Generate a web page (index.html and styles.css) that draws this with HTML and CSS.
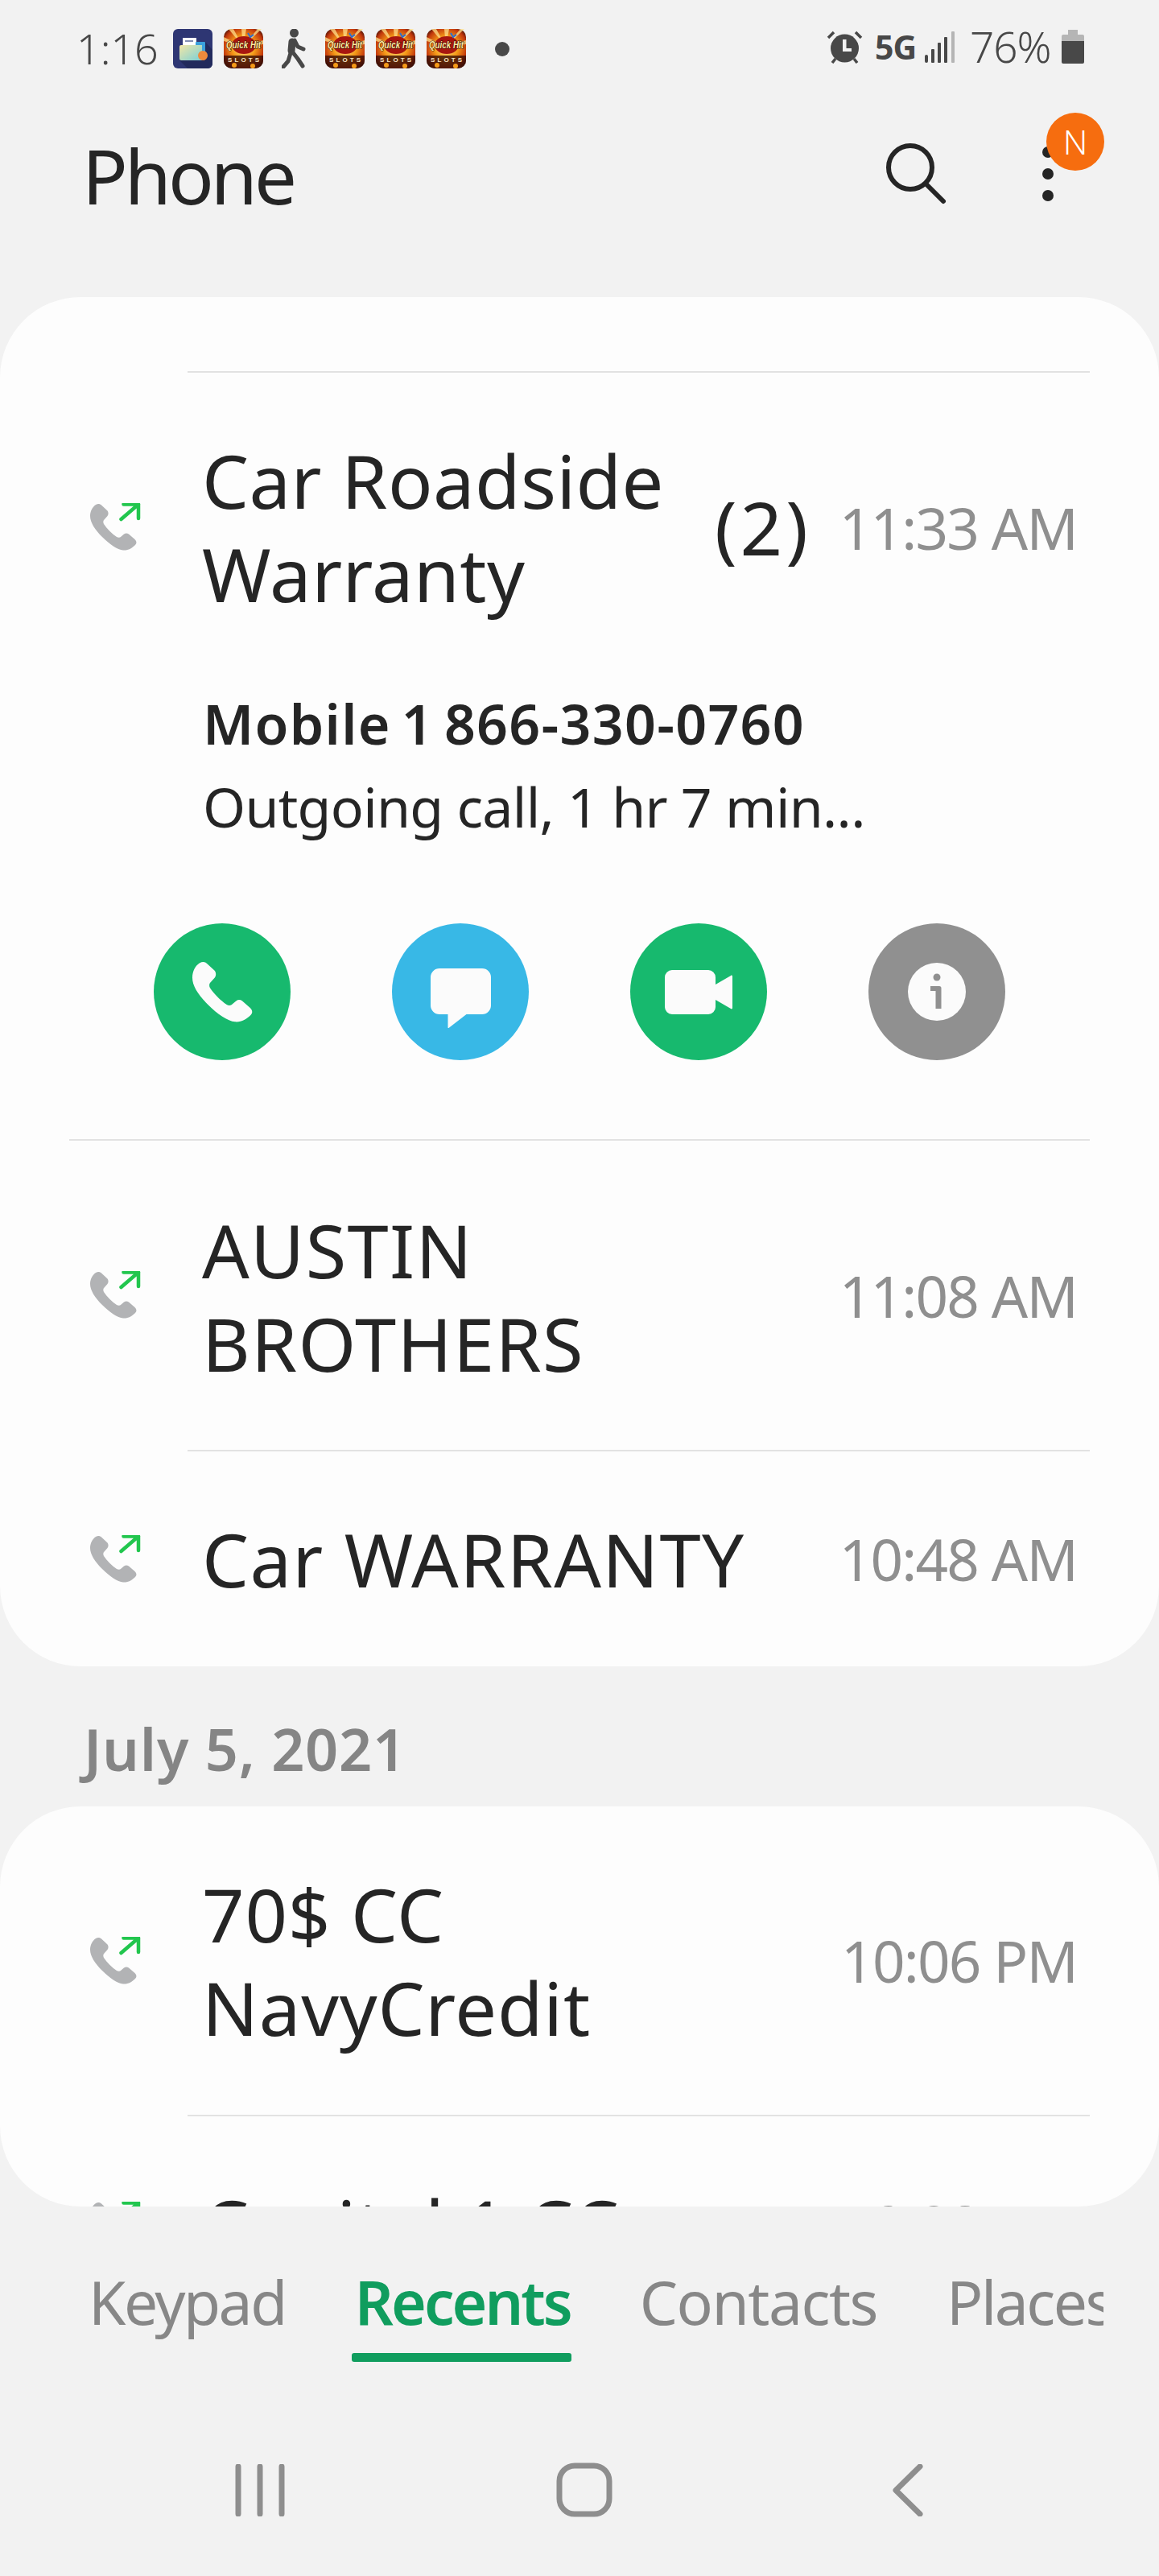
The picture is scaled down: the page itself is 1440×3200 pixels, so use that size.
FILE: index.html
```html
<!DOCTYPE html>
<html lang="en">
<head>
  <meta charset="UTF-8" />
  <title>Phone</title>
  <link rel="stylesheet" href="styles.css">
</head>
<body>
  <svg class="defs" width="0" height="0">
    <defs>
      <radialGradient id="blast" cx="50%" cy="48%" r="65%">
        <stop offset="0" stop-color="#ffe88a"/>
        <stop offset="0.45" stop-color="#f59a18"/>
        <stop offset="0.8" stop-color="#c2370c"/>
        <stop offset="1" stop-color="#2e0a04"/>
      </radialGradient>
      <linearGradient id="folder" x1="0" y1="0" x2="1" y2="1">
        <stop offset="0" stop-color="#f3e6a6"/>
        <stop offset="1" stop-color="#79d0d8"/>
      </linearGradient>
      <symbol id="slots" viewBox="0 0 49 49">
        <rect width="49" height="49" rx="10" fill="url(#blast)"/>
        <path d="M24 22L6 0h6zM24 22L22 0h6zM24 22L42 0h5zM24 22L0 10v5zM24 22l25-8v5z" fill="#ffe08a" opacity=".75"/>
        <ellipse cx="25" cy="20" rx="15" ry="11" fill="#a8160f"/>
        <path d="M30 5l3 5 4-3" fill="none" stroke="#2f6fd0" stroke-width="2"/>
        <text x="24.5" y="24" class="slots-title" textLength="43" lengthAdjust="spacingAndGlyphs">Quick Hit</text>
        <path d="M0 33h49v6a10 10 0 0 1-10 10H10A10 10 0 0 1 0 39z" fill="#3a0f06" opacity=".8"/>
        <circle cx="13" cy="45" r="3" fill="#f59a18"/><circle cx="36" cy="46" r="3" fill="#f59a18"/>
        <text x="24.5" y="41" class="slots-sub" textLength="39">SLOTS</text>
      </symbol>
      <symbol id="handset" viewBox="0 0 58 58">
        <path d="M7 1C10-.5 12 0 14 1.500L21 8C23 10 23 13 21.500 15L17.500 19.500C16 21 16 23 17 25C21 31 27 37 33 41C35 42 37 42 38.500 40.500L42 37.500C44 36 46 36 48 37.500L55.500 44C58 46.500 58 49 56 51C52 55 47 58 41 57.500C34 57 24 50 15 41C6 32 0 23 0 15C0 9 3 3.500 7 1Z"/>
      </symbol>
      <symbol id="out-call" viewBox="0 0 63 60">
        <use href="#handset" x="0" y="1" width="58" height="58" fill="#b2b3b5"/>
        <path d="M38.500 20L60 1.500M41.500 1.500H60V19" fill="none" stroke="#22c64e" stroke-width="4.500" stroke-linecap="round" stroke-linejoin="round"/>
      </symbol>
    </defs>
  </svg>

  <div class="status">
    <span class="clock">1:16</span>
    <div class="notifs">
      <svg class="app" viewBox="0 0 49 49">
        <rect width="49" height="49" rx="6" fill="#2e3673"/>
        <path d="M8 39L40 16 49 26v17a6 6 0 0 1-6 6H18z" fill="#222a5c"/>
        <rect x="12" y="11" width="17" height="14" fill="#fff"/>
        <path d="M15 15h10" stroke="#5a6a9a" stroke-width="1.500"/>
        <rect x="28" y="16" width="12" height="22" rx="1" fill="#3aa0dc"/>
        <path d="M8 22a2 2 0 0 1 2-2h26v19H10a2 2 0 0 1-2-2z" fill="url(#folder)"/>
        <circle cx="37" cy="33" r="6" fill="#ee8a3c"/>
      </svg>
      <svg class="app"><use href="#slots"/></svg>
      <svg class="walker" viewBox="0 0 30 49">
        <circle cx="15.500" cy="5" r="5.500" fill="#484848"/>
        <path d="M13 16L12 27" stroke="#484848" stroke-width="9" stroke-linecap="round"/>
        <path d="M16 14l4 8 7 3M13 28l7 9 6 9M11 30L8 40 2 47" fill="none" stroke="#484848" stroke-width="5" stroke-linecap="round" stroke-linejoin="round"/>
      </svg>
      <svg class="app"><use href="#slots"/></svg>
      <svg class="app"><use href="#slots"/></svg>
      <svg class="app"><use href="#slots"/></svg>
      <span class="more-dot"></span>
    </div>
    <div class="sys">
      <svg class="alarm" viewBox="0 0 45 41">
        <circle cx="22.500" cy="22" r="17.500" fill="#484848"/>
        <path d="M20 11h4.500v11H31v4H20z" fill="#f2f2f2"/>
        <path d="M2 9l7-7M43 9l-7-7M7 40l4-5M38 40l-4-5" stroke="#484848" stroke-width="3.500"/>
      </svg>
      <span class="net">5G</span>
      <svg class="signal" viewBox="0 0 37 39">
        <rect x="0" y="29" width="4" height="10" rx="2" fill="#484848"/>
        <rect x="8" y="22" width="4" height="17" rx="1" fill="#484848"/>
        <rect x="16" y="14" width="4" height="25" rx="1" fill="#484848"/>
        <rect x="24" y="7" width="4" height="32" rx="1" fill="#484848"/>
        <rect x="33" y="0" width="4" height="39" rx="1" fill="#b5b5b5"/>
      </svg>
      <span class="pct">76%</span>
      <svg class="battery" viewBox="0 0 28 42">
        <path d="M8 0h12v6h6a2 2 0 0 1 2 2v6H0V8a2 2 0 0 1 2-2h6z" fill="#b5b5b5"/>
        <path d="M0 14h28v26a2 2 0 0 1-2 2H2a2 2 0 0 1-2-2z" fill="#484848"/>
      </svg>
    </div>
  </div>

  <header class="appbar">
    <h1>Phone</h1>
    <svg class="search" viewBox="0 0 76 76">
      <ellipse cx="31" cy="30" rx="27" ry="27" fill="none" stroke="#252525" stroke-width="6"/>
      <path d="M50 50l22 22" stroke="#252525" stroke-width="6" stroke-linecap="round"/>
    </svg>
    <div class="menu">
      <i></i><i></i><i></i>
      <span class="badge">N</span>
    </div>
  </header>

  <main class="list">
    <section class="card card-top">
      <div class="divider"></div>
      <div class="row row-open">
        <svg class="call-icon"><use href="#out-call"/></svg>
        <div class="name">Car Roadside Warranty</div>
        <span class="count">(2)</span>
        <span class="time">11:33 AM</span>
      </div>
      <div class="details">
        <div class="number">Mobile 1 866-330-0760</div>
        <div class="meta">Outgoing call, 1 hr 7 min...</div>
      </div>
      <div class="actions">
        <div class="act act-green">
          <svg width="75" height="75" fill="#fbfbfb"><use href="#handset"/></svg>
        </div>
        <div class="act act-blue">
          <svg class="bubble" viewBox="0 0 75 74" width="75" height="74"><path d="M11 0h53a11 11 0 0 1 11 11v35a11 11 0 0 1-11 11H44.500L22.500 74c-.5.300-1 0-1-.5V57H11A11 11 0 0 1 0 46V11A11 11 0 0 1 11 0z" fill="#fbfbfb"/></svg>
        </div>
        <div class="act act-green">
          <svg viewBox="0 0 84 55" width="84" height="55"><path d="M9 0h45a9 9 0 0 1 9 9v9L82 7c1-1 2 0 2 1v39c0 1-1 2-2 1L63 37v9a9 9 0 0 1-9 9H9a9 9 0 0 1-9-9V9a9 9 0 0 1 9-9z" fill="#fbfbfb"/></svg>
        </div>
        <div class="act act-grey">
          <svg viewBox="0 0 72 72" width="72" height="72"><circle cx="36" cy="36" r="36" fill="#fbfbfb"/><circle cx="36" cy="18" r="4.500" fill="#909090"/><path d="M28 29h11a2.500 2.500 0 0 1 2.500 2.500V57h-7V35H28z" fill="#909090"/></svg>
        </div>
      </div>
      <div class="divider divider-long"></div>
      <div class="row row-two">
        <svg class="call-icon"><use href="#out-call"/></svg>
        <div class="name name-narrow name-caps">AUSTIN BROTHERS</div>
        <span class="time">11:08 AM</span>
      </div>
      <div class="divider"></div>
      <div class="row row-one">
        <svg class="call-icon"><use href="#out-call"/></svg>
        <div class="name name-caps">Car WARRANTY</div>
        <span class="time">10:48 AM</span>
      </div>
    </section>

    <h2 class="date">July 5, 2021</h2>

    <section class="card card-cut">
      <div class="row row-card">
        <svg class="call-icon"><use href="#out-call"/></svg>
        <div class="name name-narrow name-mixed">70$ CC NavyCredit</div>
        <span class="time">10:06 PM</span>
      </div>
      <div class="divider"></div>
      <div class="row row-one row-last">
        <svg class="call-icon"><use href="#out-call"/></svg>
        <div class="name">Capital 1 CC</div>
        <span class="time">9:08 PM</span>
      </div>
    </section>
  </main>

  <nav class="tabs">
    <a>Keypad</a>
    <a class="on">Recents</a>
    <a class="wide">Contacts</a>
    <a>Places</a>
  </nav>

  <div class="softkeys">
    <svg width="62" height="65" viewBox="0 0 62 65"><path d="M4 3v59M31 3v59M58 3v59" stroke="#8e8e8e" stroke-width="7" stroke-linecap="round"/></svg>
    <svg class="key-home" width="70" height="68" viewBox="0 0 70 68"><rect x="4" y="4" width="62" height="60" rx="19" fill="none" stroke="#8e8e8e" stroke-width="7"/></svg>
    <svg width="38" height="65" viewBox="0 0 38 65"><path d="M34 3L4 32.500 34 62" fill="none" stroke="#8e8e8e" stroke-width="7" stroke-linecap="round" stroke-linejoin="round"/></svg>
  </div>
</body>
</html>
```

FILE: styles.css
```css
* { box-sizing: border-box; }
html, body { margin: 0; padding: 0; }
body { width: 1440px; height: 3200px; background: #f2f2f2; font-family: "Noto Sans", "Open Sans", sans-serif; color: #252525; overflow: hidden; }
.defs { display: block; height: 0; }
.slots-title { font: italic 700 13px "Liberation Sans", sans-serif; fill: #ffe9a0; stroke: #2a0d02; stroke-width: 1.200px; paint-order: stroke; text-anchor: middle; }
.slots-sub { font: 700 8px "Liberation Sans", sans-serif; fill: #f7e6c8; text-anchor: middle; }

/* status bar */
.status { height: 120px; padding: 36px 93px 0 95px; display: flex; align-items: flex-start; color: #484848; }
.clock { width: 120px; font-size: 52px; line-height: 48px; font-weight: 300; }
.notifs { display: flex; align-items: center; height: 49px; }
.app { width: 49px; height: 49px; margin-right: 14px; }
.walker { width: 30px; height: 49px; margin: 0 24px 0 9px; }
.more-dot { width: 18px; height: 18px; border-radius: 50%; background: #484848; margin-left: 22px; }
.sys { margin-left: auto; display: flex; align-items: center; height: 44px; }
.alarm { width: 45px; height: 41px; }
.net { font-size: 41px; line-height: 44px; font-weight: 700; margin-left: 15px; width: 62px; letter-spacing: -1px; }
.signal { width: 37px; height: 39px; }
.pct { font-size: 53px; line-height: 44px; font-weight: 300; margin-left: 19px; width: 114px; letter-spacing: -1px; }
.battery { width: 28px; height: 42px; }

/* app bar */
.appbar { height: 249px; padding-left: 102px; display: flex; align-items: flex-start; position: relative; }
.appbar h1 { margin: 48px 0 0; font-size: 94px; line-height: 100px; font-weight: 400; letter-spacing: -4px; }
.search { width: 76px; height: 76px; margin: 58px 0 0 auto; }
.menu { width: 14px; margin: 62px 131px 0 119px; display: flex; flex-direction: column; gap: 13px; }
.menu i { width: 14px; height: 14px; border-radius: 50%; background: #252525; }
.badge { position: absolute; top: 20px; left: 1300px; width: 72px; height: 72px; border-radius: 50%; background: #f66d0f; color: #fff; font-size: 42px; font-weight: 300; line-height: 72px; text-align: center; }

/* list */
.list { height: 2372px; overflow: hidden; }
.card { background: #fdfdfd; border-radius: 100px; }
.card-top { padding-top: 92px; height: 1701px; }
.card-cut { height: 497px; overflow: hidden; }
.divider { height: 2px; background: #e2e2e2; margin: 0 86px 0 233px; }
.divider-long { margin-left: 86px; }
.row { display: flex; align-items: center; padding: 0 102px 0 112px; }
.row-open { height: 384px; }
.row-two { height: 384px; }
.row-two .name { margin-top: 4px; }
.row-one { height: 267px; }
.row-last { padding-top: 4px; }
.row-card { height: 383px; }
.call-icon { width: 63px; height: 60px; flex: none; margin-right: 76px; }
.name { flex: 1; font-size: 92px; line-height: 116px; letter-spacing: .4px; }
.row-open .name { flex: none; width: 637px; }
.name-narrow { max-width: 600px; }
.name-caps { letter-spacing: 1.3px; }
.name-mixed { letter-spacing: .8px; }
.count { font-size: 92px; line-height: 116px; letter-spacing: 4px; }
.time { margin-left: auto; font-size: 71px; letter-spacing: -1.800px; color: #8f8f8f; white-space: nowrap; }
.details { padding-left: 252px; height: 300px; }
.number { font-size: 68px; line-height: 103px; font-weight: 600; letter-spacing: 1.300px; word-spacing: -6px; }
.meta { font-size: 68px; line-height: 103px; letter-spacing: -.7px; }
.actions { display: flex; gap: 126px; padding-left: 191px; height: 268px; }
.act { width: 170px; height: 170px; border-radius: 50%; display: flex; align-items: center; justify-content: center; }
.act-green { background: #17b96e; }
.act-blue { background: #38b8e6; }
.act-grey { background: #909090; }
.bubble { margin-top: 16px; }
.date { margin: 0; height: 174px; padding: 60px 0 0 104px; font-size: 72px; line-height: 84px; font-weight: 600; letter-spacing: .8px; color: #858585; }

/* tabs */
.tabs { height: 320px; width: 1261px; margin-left: 110px; display: flex; gap: 86px; overflow: hidden; }
.tabs a { position: relative; height: 193px; font-size: 75px; letter-spacing: -2.500px; line-height: 100px; padding-top: 68px; color: #878787; white-space: nowrap; }
.tabs a.wide { letter-spacing: -1.500px; }
.tabs a.on { color: #109d5e; font-weight: 600; letter-spacing: -3px; }
.tabs a.on::after { content: ""; position: absolute; left: -4px; right: -1px; top: 182px; height: 11px; border-radius: 3px; background: #109d5e; }

/* soft keys */
.softkeys { height: 139px; display: flex; align-items: flex-start; padding-left: 292px; }
.key-home { margin: -2px 348px 0 337px; }
```
